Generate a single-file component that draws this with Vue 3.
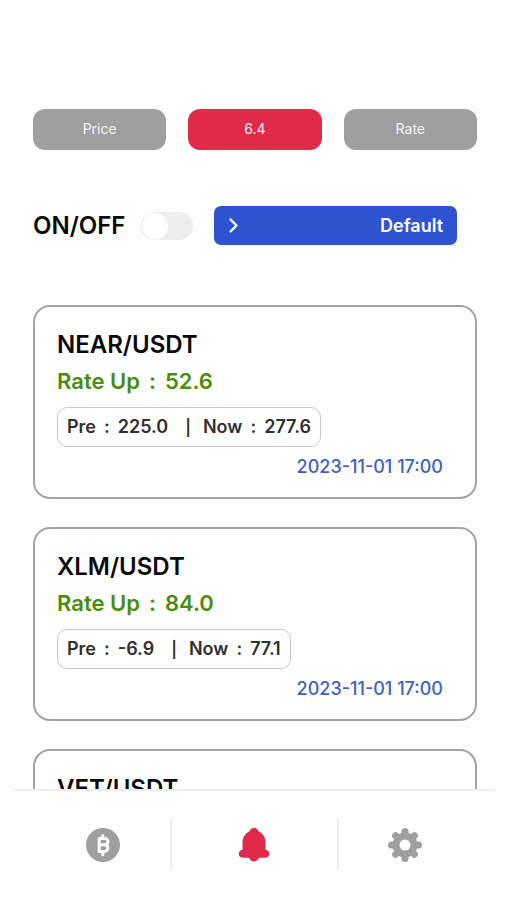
<script setup>
import { ref } from 'vue'

const tabs = ['Price', '6.4', 'Rate']
const activeTab = ref('6.4')
const enabled = ref(false)

const alerts = [
  { pair: 'NEAR/USDT', rate: '52.6', pre: '225.0', now: '277.6', time: '2023-11-01 17:00' },
  { pair: 'XLM/USDT', rate: '84.0', pre: '-6.9', now: '77.1', time: '2023-11-01 17:00' },
  { pair: 'VET/USDT', rate: '', pre: '', now: '', time: '' }
]
</script>

<template>
  <div class="screen">
    <main class="content">
      <div class="tabs">
        <button
          v-for="tab in tabs"
          :key="tab"
          type="button"
          class="tab"
          :class="{ active: tab === activeTab }"
          @click="activeTab = tab"
        >{{ tab }}</button>
      </div>

      <div class="controls">
        <label class="switch">
          <span class="switch-label">ON/OFF</span>
          <input v-model="enabled" type="checkbox" class="toggle">
        </label>
        <button type="button" class="picker">
          <svg class="chevron" viewBox="0 0 12 18" aria-hidden="true">
            <path d="M2.500 2.500l6 6-6 6" />
          </svg>
          <span>Default</span>
        </button>
      </div>

      <section class="cards">
        <article v-for="alert in alerts" :key="alert.pair" class="card">
          <h2 class="pair">{{ alert.pair }}</h2>
          <template v-if="alert.rate">
            <p class="rate"><span>Rate Up</span><span>:</span><span>{{ alert.rate }}</span></p>
            <p class="values">
              <span>Pre</span><span>:</span><span>{{ alert.pre }}</span>
              <span class="bar">|</span>
              <span>Now</span><span>:</span><span>{{ alert.now }}</span>
            </p>
            <time class="time">{{ alert.time }}</time>
          </template>
        </article>
      </section>
    </main>

    <nav class="nav">
      <a href="#coins" class="nav-item" aria-label="Coins">
        <svg viewBox="0 0 36 36" aria-hidden="true">
          <circle cx="18" cy="18" r="17" fill="#9f9f9f" />
          <g fill="none" stroke="#fff" stroke-width="3" stroke-linejoin="round" stroke-linecap="round">
            <path d="M14.200 11.400h5.600a3.200 3.200 0 0 1 0 6.400h-5.600zM14.200 17.800h6.100a3.400 3.400 0 0 1 0 6.600h-6.100z" />
            <path d="M17.800 8.400v2.400M17.800 25v2.800" />
          </g>
        </svg>
      </a>
      <a href="#alerts" class="nav-item" aria-label="Alerts">
        <svg viewBox="0 0 36 36" aria-hidden="true">
          <path
            fill="#df2b49"
            d="M18 1c-2.400 0-3.900 1.400-4.600 3.300C9 6.400 6.500 10.500 6.500 15.500v7.300C4.200 23.100 2.700 24.700 2.700 26.800c0 2.200 1.600 3.900 3.900 3.900h6.400c1 2.200 2.700 3.700 5 3.700s4-1.500 5-3.700h6.400c2.300 0 3.900-1.700 3.900-3.900 0-2.100-1.500-3.700-3.800-4v-7.300c0-5-2.500-9.100-6.900-11.200C21.900 2.400 20.400 1 18 1z"
          />
        </svg>
      </a>
      <a href="#settings" class="nav-item" aria-label="Settings">
        <svg viewBox="0 0 36 36" aria-hidden="true">
          <g stroke="#9f9f9f" stroke-width="7" stroke-linecap="round">
            <path d="M18 4.500v27M4.500 18h27M8.600 8.600l18.800 18.800M27.400 8.600L8.600 27.400" />
          </g>
          <circle cx="18" cy="18" r="12.500" fill="#9f9f9f" />
          <circle cx="18" cy="18" r="5.500" fill="#fff" />
        </svg>
      </a>
    </nav>
  </div>
</template>

<style>
body {
  background: #fefefe;
}
</style>

<style scoped>
.screen {
  display: flex;
  flex-direction: column;
  height: 100vh;
  font-family: Inter, "Liberation Sans", sans-serif;
  color: #0a0a0a;
}

.content {
  flex: 1;
  min-height: 0;
  overflow: hidden;
  padding: 109px 30px 0 33px;
}

button {
  border: 0;
  font-family: inherit;
  color: #fff;
  cursor: pointer;
}

.tabs {
  display: grid;
  grid-template-columns: repeat(3, 1fr);
  gap: 22px;
}

.tab {
  height: 41px;
  padding: 0 0 2px;
  border-radius: 12px;
  background: #9f9f9f;
  font-size: 14px;
  color: #f4f4f4;
}

.tab.active {
  background: #df2b49;
}

.controls {
  display: flex;
  align-items: center;
  gap: 21px;
  margin: 56px 20px 0 0;
}

.switch {
  display: flex;
  align-items: center;
  gap: 16px;
}

.switch-label {
  font-size: 24px;
  font-weight: 600;
  line-height: 30px;
}

.toggle {
  appearance: none;
  display: flex;
  width: 52px;
  height: 28px;
  margin: 0;
  padding: 1px;
  box-sizing: border-box;
  border-radius: 14px;
  background: #eeeeee;
  cursor: pointer;
}

.toggle::before {
  content: "";
  width: 26px;
  height: 26px;
  border-radius: 50%;
  background: #fff;
}

.toggle:checked {
  justify-content: flex-end;
  background: #2e54d1;
}

.picker {
  flex: 1;
  display: flex;
  align-items: center;
  justify-content: space-between;
  height: 39px;
  padding: 0 14px;
  border-radius: 7px;
  background: #2e54d1;
  font-size: 18px;
  font-weight: 600;
}

.chevron {
  width: 12px;
  height: 18px;
  fill: none;
  stroke: #fff;
  stroke-width: 2.4;
  stroke-linecap: round;
  stroke-linejoin: round;
}

.cards {
  display: flex;
  flex-direction: column;
  gap: 28px;
  margin-top: 60px;
}

.card {
  display: flex;
  flex-direction: column;
  align-items: flex-start;
  padding: 23px 32px 18px 22px;
  border: 2px solid #a4a4a4;
  border-radius: 17px;
  background: #fff;
}

.pair {
  margin: 0;
  font-size: 24px;
  font-weight: 600;
  line-height: 30px;
}

.rate {
  display: flex;
  gap: 9px;
  margin: 8px 0 0;
  font-size: 22px;
  font-weight: 600;
  line-height: 26px;
  color: #4a8d0c;
}

.values {
  display: flex;
  gap: 8px;
  margin: 13px 0 0;
  padding: 7px 9px;
  border: 1px solid #c8c8c8;
  border-radius: 10px;
  font-size: 18px;
  font-weight: 600;
  line-height: 24px;
  color: #303030;
}

.bar {
  margin: 0 4px 0 9px;
  font-size: 16px;
}

.time {
  align-self: flex-end;
  margin-top: 8px;
  font-size: 18px;
  font-weight: 500;
  line-height: 24px;
  color: #3f5fc8;
}

.nav {
  display: grid;
  grid-template-columns: 4fr 5fr 4fr;
  margin: 0 12px 0 14px;
  padding: 28px 24px 30px 22px;
  border-top: 2px solid #eeeeee;
}

.nav-item {
  display: flex;
  align-items: center;
  justify-content: center;
  height: 51px;
}

.nav-item + .nav-item {
  border-left: 2px solid #eeeeee;
}

.nav-item svg {
  width: 36px;
  height: 36px;
}
</style>
